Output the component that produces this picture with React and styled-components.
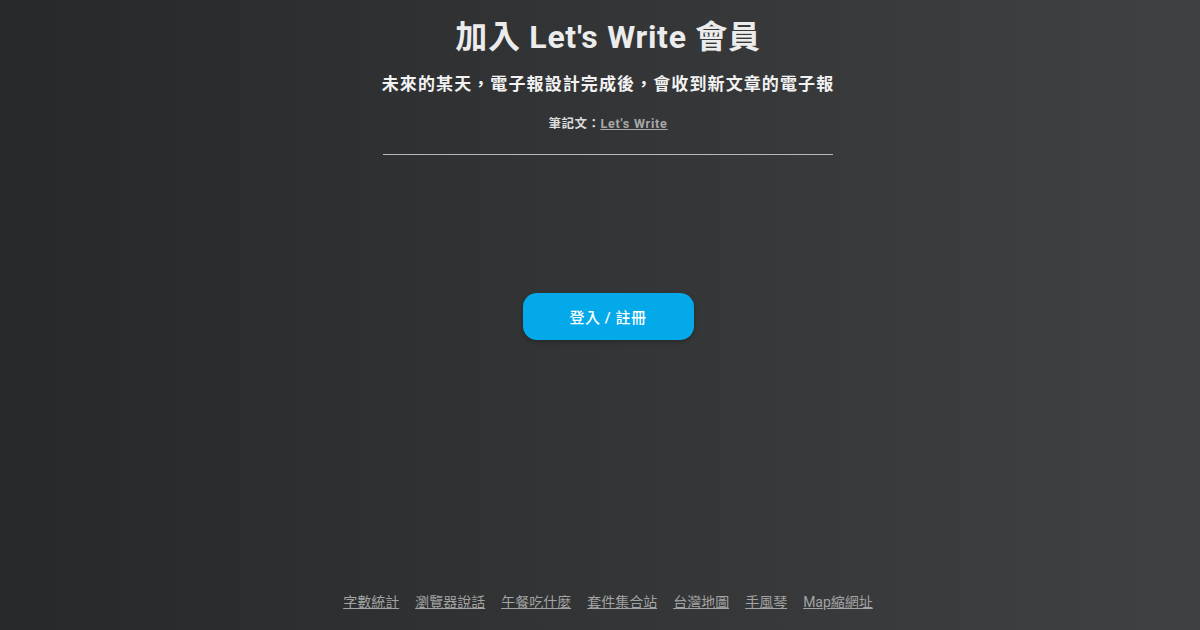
import React from "react";
import styled, { createGlobalStyle } from "styled-components";

const Global = createGlobalStyle`
  html, body { margin: 0; padding: 0; }
  body {
    font-family: Roboto, "Noto Sans CJK TC", "Noto Sans", sans-serif;
    background: #2b2d2f;
  }
`;

const Page = styled.div`
  width: 1200px;
  height: 630px;
  box-sizing: border-box;
  background: linear-gradient(to right, #262829, #3f4143);
  display: flex;
  flex-direction: column;
  align-items: center;
  padding-top: 16px;
  padding-left: 16px;
`;

const Title = styled.h1`
  margin: 0;
  font-size: 32px;
  line-height: 42px;
  font-weight: 700;
  color: #ececec;
  letter-spacing: 0.7px;
`;

const Subtitle = styled.h2`
  margin: 14px 0 0;
  font-size: 17px;
  line-height: 24px;
  font-weight: 700;
  color: #f2f2f2;
  letter-spacing: 1.1px;
`;

const Note = styled.p`
  margin: 19px 0 0;
  font-size: 12.5px;
  line-height: 18px;
  font-weight: 700;
  color: #dcdcdc;
  letter-spacing: 0.5px;
  a {
    color: #a9a9a9;
    text-decoration: underline;
    letter-spacing: 0.8px;
  }
`;

const Divider = styled.hr`
  width: 450px;
  margin: 21px 0 0;
  border: none;
  border-top: 1px solid #b8b8b8;
`;

const Main = styled.div`
  flex: 1;
  display: flex;
  align-items: flex-start;
  justify-content: center;
  padding-top: 138px;
`;

const Button = styled.button`
  width: 171px;
  height: 47px;
  border: none;
  border-radius: 14px;
  background: #03a9e9;
  color: #fff;
  font-family: Roboto, "Noto Sans CJK TC", sans-serif;
  font-size: 15px;
  font-weight: 500;
  letter-spacing: 0.5px;
  box-shadow: 0 2px 4px rgba(0, 0, 0, 0.25);
  cursor: pointer;
`;

const Footer = styled.nav`
  display: flex;
  gap: 16px;
  padding-bottom: 18px;
`;

const FootLink = styled.a`
  font-size: 14px;
  line-height: 20px;
  color: #a3a3a3;
  text-decoration: underline;
`;

const links = ["字數統計", "瀏覽器說話", "午餐吃什麼", "套件集合站", "台灣地圖", "手風琴", "Map縮網址"];

export default function App() {
  return (
    <>
      <Global />
      <Page>
        <Title>加入 Let's Write 會員</Title>
        <Subtitle>未來的某天，電子報設計完成後，會收到新文章的電子報</Subtitle>
        <Note>
          筆記文：<a href="#">Let's Write</a>
        </Note>
        <Divider />
        <Main>
          <Button>登入 / 註冊</Button>
        </Main>
        <Footer>
          {links.map((l) => (
            <FootLink key={l} href="#">{l}</FootLink>
          ))}
        </Footer>
      </Page>
    </>
  );
}
